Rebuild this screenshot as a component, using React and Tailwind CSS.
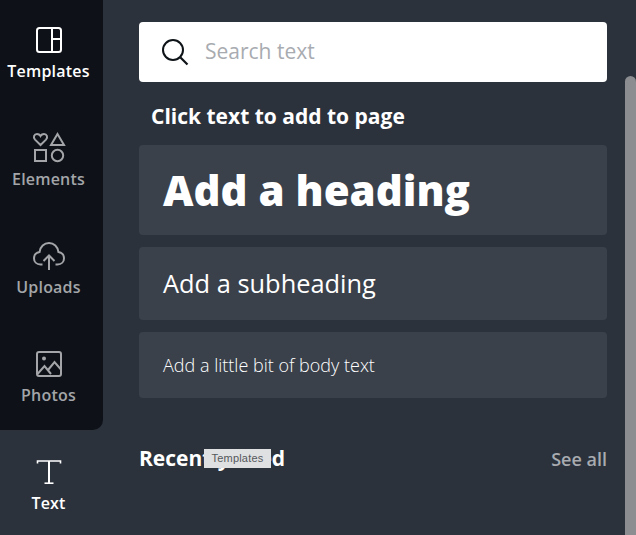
const TemplatesIcon = () => (
  <svg width="30" height="30" viewBox="0 0 30 30" fill="none" stroke="currentColor" strokeWidth="2">
    <rect x="3" y="3" width="24" height="24" rx="2.5" />
    <path d="M18 3v24M18 14h9" />
  </svg>
);

const ElementsIcon = () => (
  <svg width="34" height="32" viewBox="0 0 34 32" fill="none" stroke="currentColor" strokeWidth="2">
    <path d="M8.500 13 3 7.600C.8 5.300 2.200 2 5 2c1.500 0 2.700.7 3.500 2C9.300 2.700 10.500 2 12 2c2.800 0 4.200 3.300 2 5.600z" />
    <path d="M25.500 2 32 13H19z" />
    <rect x="3" y="18" width="11" height="11" />
    <circle cx="25.500" cy="23.500" r="5.700" />
  </svg>
);

const UploadsIcon = () => (
  <svg width="34" height="30" viewBox="0 0 34 30" fill="none" stroke="currentColor" strokeWidth="2">
    <path d="M10.500 23.500H8.500C4.500 23.500 2 20.700 2 17.200 2 13.900 4.300 11.300 7.600 10.900 8.200 5.600 12.100 2 17 2c4.900 0 8.800 3.600 9.400 8.900 3.300.4 5.600 3 5.600 6.300 0 3.500-2.500 6.300-6.500 6.300h-2" />
    <path d="M17 29V14.500M11.500 20 17 14.500l5.500 5.500" />
  </svg>
);

const PhotosIcon = () => (
  <svg width="30" height="30" viewBox="0 0 30 30" fill="none" stroke="currentColor" strokeWidth="2">
    <rect x="3" y="3" width="24" height="24" rx="2" />
    <circle cx="10" cy="9.500" r="2" fill="currentColor" stroke="none" />
    <path d="M3.500 25 10.500 17 17 25M14 21l6.500-8 6.500 7.500" />
  </svg>
);

const TextIcon = () => (
  <svg width="26" height="26" viewBox="0 0 26 26" fill="none" stroke="currentColor">
    <path d="M1.500 4.500V2h23v2.500" strokeWidth="1.600" />
    <path d="M13 2v22" strokeWidth="2" />
    <path d="M8.500 24.200h9" strokeWidth="1.600" />
  </svg>
);

const SearchIcon = () => (
  <svg width="30" height="30" viewBox="0 0 30 30" fill="none" stroke="#0e1318" strokeWidth="2">
    <circle cx="13" cy="13" r="10" />
    <path d="M20.500 20.500 27.500 27.500" strokeWidth="2.200" />
  </svg>
);

const items = [
  { label: 'Templates', icon: <TemplatesIcon />, active: true },
  { label: 'Elements', icon: <ElementsIcon /> },
  { label: 'Uploads', icon: <UploadsIcon /> },
  { label: 'Photos', icon: <PhotosIcon /> },
];

const NavItem = ({ label, icon, active }) => (
  <div className={`h-[108px] pr-[6px] flex flex-col items-center justify-center gap-[3px] ${active ? 'text-white' : 'text-[#a3a5a8]'}`}>
    <div className="h-8 flex items-center justify-center">{icon}</div>
    <span className="text-base font-semibold leading-6 tracking-[0.2px]">{label}</span>
  </div>
);

const App = () => {
  return (
    <div className="relative w-[636px] h-[535px] overflow-hidden flex bg-[#2b323c] font-['Open_Sans',sans-serif]">
      <div className="w-[103px] shrink-0">
        <div className="bg-[#0e1218] rounded-br-[10px] h-[430px]">
          <div className="-translate-y-px">
            {items.map((item) => (
              <NavItem key={item.label} {...item} />
            ))}
          </div>
        </div>
        <div className="pt-px">
          <NavItem label="Text" icon={<TextIcon />} active />
        </div>
      </div>

      <div className="flex-1 pl-9 pr-[29px] pt-[22px]">
        <div className="h-[60px] bg-white rounded flex items-center pl-[21px] gap-[15px]">
          <SearchIcon />
          <span className="text-[21px] text-[#a8abb0]">Search text</span>
        </div>

        <h2 className="mt-[18px] ml-3 text-[21px] font-bold leading-[32px] text-white">Click text to add to page</h2>

        <div className="mt-[13px] flex flex-col gap-3 text-white">
          <div className="h-[90px] bg-[#3a414b] rounded flex items-center pl-6">
            <span className="text-[42px] font-extrabold leading-none">Add a heading</span>
          </div>
          <div className="h-[73px] bg-[#3a414b] rounded flex items-center pl-6">
            <span className="text-[25.400px] font-normal">Add a subheading</span>
          </div>
          <div className="h-[66px] bg-[#3a414b] rounded flex items-center pl-6">
            <span className="text-lg font-light">Add a little bit of body text</span>
          </div>
        </div>

        <div className="mt-[43px] flex items-center justify-between">
          <span className="text-[21px] font-bold leading-8 text-white">Recently used</span>
          <span className="text-lg font-semibold leading-8 pt-[2px] text-[#a8abb0]">See all</span>
        </div>
      </div>

      {/* scrollbar + tooltip sit on top of the panel */}
      <div className="absolute right-0 top-[76px] bottom-0 w-[11px] rounded-t-md bg-[#8b8d90]" />
      <div className="absolute left-[204px] top-[449px] h-[19px] w-[67px] bg-[#dfe0e2] flex items-center justify-center text-[11px] tracking-[0.2px] text-[#55585c] font-['Liberation_Sans',sans-serif]">
        Templates
      </div>
    </div>
  );
};

export default App;
